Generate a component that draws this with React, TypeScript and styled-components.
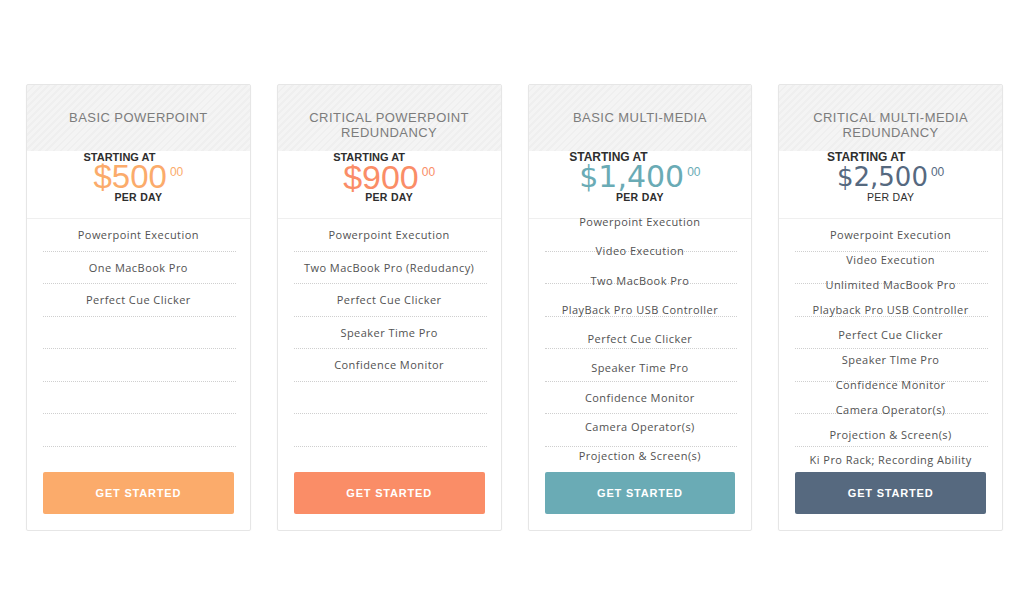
import React from 'react';
import styled, { createGlobalStyle } from 'styled-components';

const GlobalStyle = createGlobalStyle`
  html, body {
    margin: 0;
    padding: 0;
    background: #ffffff;
  }
  body {
    font-family: 'Liberation Sans', Arial, sans-serif;
  }
`;

type Plan = {
  id: string;
  title: string;
  amount: string;
  color: string;
  priceFont: string;
  priceSize: number;
  labelSize: number;
  perDayBold: boolean;
  rowHeight: number;
  listOffset: number;
  features: string[];
};

const helvetica = "'Liberation Sans', Arial, sans-serif";
const lucida = "'DejaVu Sans', Verdana, sans-serif";

const plans: Plan[] = [
  {
    id: 'basic-pp',
    title: 'Basic Powerpoint',
    amount: '$500',
    color: '#fbab6b',
    priceFont: helvetica,
    priceSize: 33,
    labelSize: 11,
    perDayBold: true,
    rowHeight: 32.5,
    listOffset: 0,
    features: ['Powerpoint Execution', 'One MacBook Pro', 'Perfect Cue Clicker'],
  },
  {
    id: 'critical-pp',
    title: 'Critical Powerpoint Redundancy',
    amount: '$900',
    color: '#fa8d67',
    priceFont: helvetica,
    priceSize: 34,
    labelSize: 11,
    perDayBold: true,
    rowHeight: 32.5,
    listOffset: 0,
    features: [
      'Powerpoint Execution',
      'Two MacBook Pro (Redudancy)',
      'Perfect Cue Clicker',
      'Speaker Time Pro',
      'Confidence Monitor',
    ],
  },
  {
    id: 'basic-mm',
    title: 'Basic Multi-Media',
    amount: '$1,400',
    color: '#6aabb5',
    priceFont: lucida,
    priceSize: 30,
    labelSize: 12,
    perDayBold: true,
    rowHeight: 29.3,
    listOffset: -12,
    features: [
      'Powerpoint Execution',
      'Video Execution',
      'Two MacBook Pro',
      'PlayBack Pro USB Controller',
      'Perfect Cue Clicker',
      'Speaker Time Pro',
      'Confidence Monitor',
      'Camera Operator(s)',
      'Projection & Screen(s)',
    ],
  },
  {
    id: 'critical-mm',
    title: 'Critical Multi-Media Redundancy',
    amount: '$2,500',
    color: '#56697f',
    priceFont: lucida,
    priceSize: 26,
    labelSize: 12,
    perDayBold: false,
    rowHeight: 25,
    listOffset: 2.5,
    features: [
      'Powerpoint Execution',
      'Video Execution',
      'Unlimited MacBook Pro',
      'Playback Pro USB Controller',
      'Perfect Cue Clicker',
      'Speaker TIme Pro',
      'Confidence Monitor',
      'Camera Operator(s)',
      'Projection & Screen(s)',
      'Ki Pro Rack; Recording Ability',
    ],
  },
];

const Page = styled.div`
  padding: 84px 0 0 26px;
`;

const PlansGrid = styled.div`
  display: grid;
  width: 977px;
  grid-template-columns: repeat(4, minmax(0, 1fr));
  gap: 26px;
`;

const Card = styled.div`
  display: flex;
  flex-direction: column;
  height: 447px;
  box-sizing: border-box;
  background: #ffffff;
  border: 1px solid #e6e6e6;
  border-radius: 2px;
  box-shadow: 0 1px 2px rgba(0, 0, 0, 0.03);
`;

const Header = styled.div`
  height: 66px;
  box-sizing: border-box;
  display: flex;
  justify-content: center;
  padding: 25px 18px 0;
  background-color: #f3f3f3;
  background-image: repeating-linear-gradient(
    -45deg,
    #f4f4f4 0px,
    #f4f4f4 3px,
    #efefef 3px,
    #efefef 5px
  );
`;

const Title = styled.h3`
  margin: 0;
  font-family: 'Liberation Sans', Arial, sans-serif;
  font-weight: 400;
  font-size: 13px;
  line-height: 15px;
  letter-spacing: 0.45px;
  color: #7c7c7c;
  text-transform: uppercase;
  text-align: center;
`;

const PriceArea = styled.div`
  height: 68px;
  display: flex;
  justify-content: center;
  border-bottom: 1px solid #efefef;
  box-sizing: border-box;
`;

const PriceBlock = styled.div`
  display: inline-flex;
  flex-direction: column;
  align-items: center;
`;

const StartingAt = styled.div<{ $size: number }>`
  align-self: flex-start;
  margin-left: -10px;
  font-size: ${p => p.$size}px;
  line-height: 12px;
  font-weight: 700;
  color: #2e2e2e;
  white-space: nowrap;
`;

const PriceLine = styled.div<{ $color: string }>`
  display: flex;
  align-items: flex-start;
  height: 28px;
  color: ${p => p.$color};
`;

const Amount = styled.span<{ $size: number; $font: string }>`
  font-family: ${p => p.$font};
  font-size: ${p => p.$size}px;
  line-height: 28px;
  white-space: nowrap;
`;

const Cents = styled.span`
  font-size: 12px;
  line-height: 12px;
  margin: 3px 0 0 3px;
`;

const PerDay = styled.div<{ $bold: boolean }>`
  font-size: 10.5px;
  line-height: 12px;
  font-weight: ${p => (p.$bold ? 700 : 400)};
  letter-spacing: 0.3px;
  color: #2e2e2e;
`;

const ListArea = styled.div`
  position: relative;
  height: 253px;
`;

const Rules = styled.div`
  position: absolute;
  top: 0;
  left: 16px;
  right: 14px;
  display: flex;
  flex-direction: column;
`;

const Rule = styled.div`
  height: 32.5px;
  box-sizing: border-box;
  border-bottom: 1px dotted #cfcfcf;
`;

const Features = styled.ul<{ $offset: number }>`
  position: relative;
  list-style: none;
  margin: ${p => p.$offset}px 0 0;
  padding: 0;
`;

const Feature = styled.li<{ $height: number }>`
  height: ${p => p.$height}px;
  line-height: ${p => p.$height}px;
  text-align: center;
  font-family: 'Open Sans', 'DejaVu Sans', sans-serif;
  font-size: 11px;
  letter-spacing: 0.45px;
  color: #525252;
  white-space: nowrap;
`;

const ButtonWrap = styled.div`
  padding: 0 16px 15px;
`;

const GetStarted = styled.a<{ $color: string }>`
  display: flex;
  align-items: center;
  justify-content: center;
  height: 42px;
  border-radius: 2px;
  background: ${p => p.$color};
  color: #ffffff;
  font-size: 11px;
  font-weight: 700;
  letter-spacing: 0.8px;
  text-decoration: none;
  text-transform: uppercase;
`;

const App: React.FC = () => {
  return (
    <Page>
      <GlobalStyle />
      <PlansGrid>
        {plans.map(plan => (
          <Card key={plan.id}>
            <Header>
              <Title>{plan.title}</Title>
            </Header>
            <PriceArea>
              <PriceBlock>
                <StartingAt $size={plan.labelSize}>STARTING AT</StartingAt>
                <PriceLine $color={plan.color}>
                  <Amount $size={plan.priceSize} $font={plan.priceFont}>
                    {plan.amount}
                  </Amount>
                  <Cents>00</Cents>
                </PriceLine>
                <PerDay $bold={plan.perDayBold}>PER DAY</PerDay>
              </PriceBlock>
            </PriceArea>
            <ListArea>
              <Rules>
                {Array.from({ length: 7 }).map((_, i) => (
                  <Rule key={i} />
                ))}
              </Rules>
              <Features $offset={plan.listOffset}>
                {plan.features.map(feature => (
                  <Feature key={feature} $height={plan.rowHeight}>
                    {feature}
                  </Feature>
                ))}
              </Features>
            </ListArea>
            <ButtonWrap>
              <GetStarted href="#" $color={plan.color}>
                Get Started
              </GetStarted>
            </ButtonWrap>
          </Card>
        ))}
      </PlansGrid>
    </Page>
  );
};

export default App;
